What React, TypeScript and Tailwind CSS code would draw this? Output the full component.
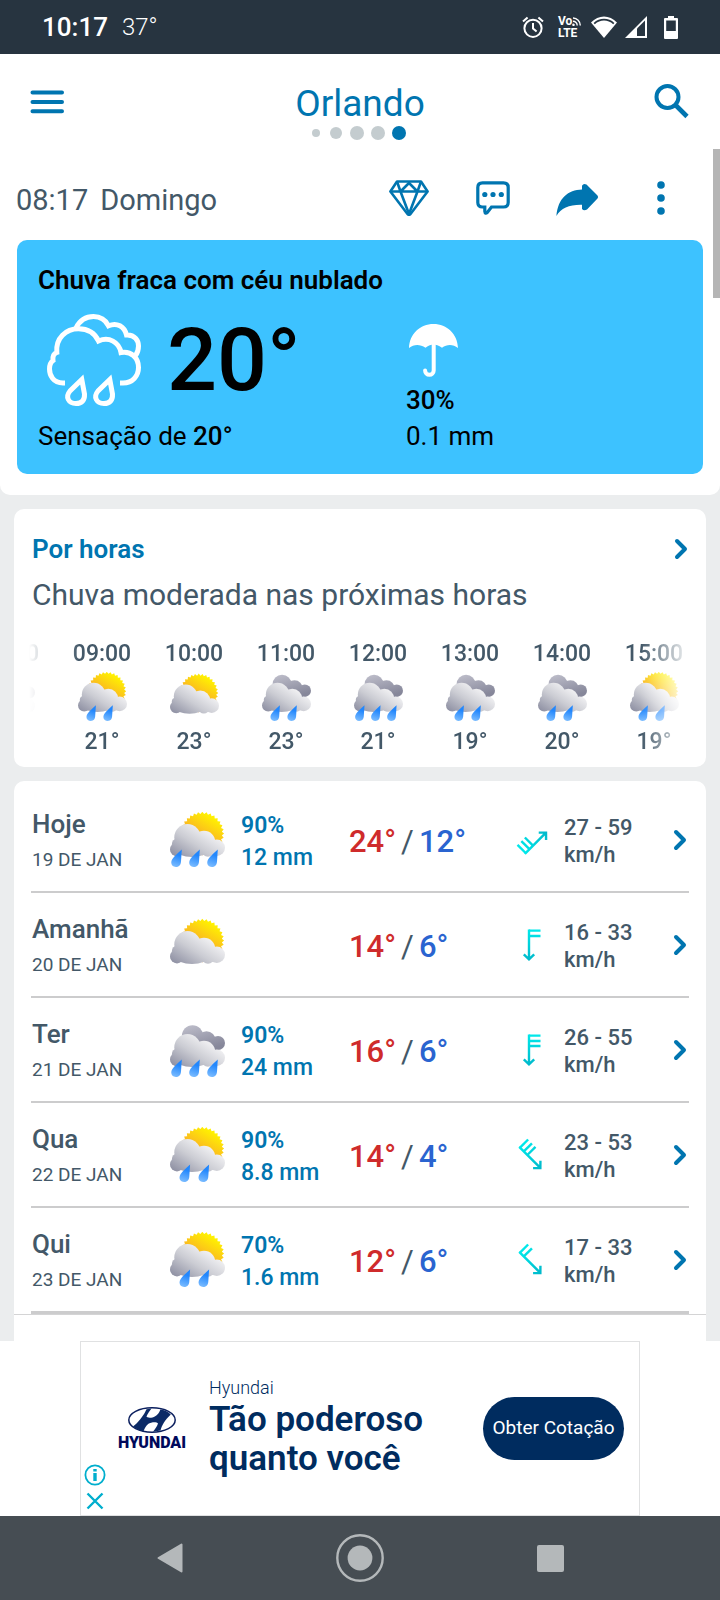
import { ReactNode } from "react";
import { clsx } from "clsx";

type Sky = "sun" | "clouds";

interface Hour {
  time: string;
  sky: Sky;
  drops: number;
  temp: string;
}

interface Day {
  name: string;
  date: string;
  sky: Sky;
  drops: number;
  chance?: string;
  rain?: string;
  max: string;
  min: string;
  wind: string;
  angle: number;
  barbs: number;
}

const hours: Hour[] = [
  { time: "08:00", sky: "clouds", drops: 0, temp: "20°" },
  { time: "09:00", sky: "sun", drops: 2, temp: "21°" },
  { time: "10:00", sky: "sun", drops: 0, temp: "23°" },
  { time: "11:00", sky: "clouds", drops: 2, temp: "23°" },
  { time: "12:00", sky: "clouds", drops: 3, temp: "21°" },
  { time: "13:00", sky: "clouds", drops: 2, temp: "19°" },
  { time: "14:00", sky: "clouds", drops: 2, temp: "20°" },
  { time: "15:00", sky: "sun", drops: 2, temp: "19°" },
];

const days: Day[] = [
  { name: "Hoje", date: "19 DE JAN", sky: "sun", drops: 3, chance: "90%", rain: "12 mm", max: "24°", min: "12°", wind: "27 - 59", angle: -135, barbs: 3 },
  { name: "Amanhã", date: "20 DE JAN", sky: "sun", drops: 0, max: "14°", min: "6°", wind: "16 - 33", angle: 0, barbs: 2 },
  { name: "Ter", date: "21 DE JAN", sky: "clouds", drops: 3, chance: "90%", rain: "24 mm", max: "16°", min: "6°", wind: "26 - 55", angle: 0, barbs: 3 },
  { name: "Qua", date: "22 DE JAN", sky: "sun", drops: 2, chance: "90%", rain: "8.8 mm", max: "14°", min: "4°", wind: "23 - 53", angle: -45, barbs: 3 },
  { name: "Qui", date: "23 DE JAN", sky: "sun", drops: 2, chance: "70%", rain: "1.6 mm", max: "12°", min: "6°", wind: "17 - 33", angle: -45, barbs: 2 },
];

// Toothed edge of the sun
const sunPoints = Array.from({ length: 64 }, (_, i) => {
  const r = i % 2 ? 19.6 : 21.8;
  const a = (i * Math.PI) / 32;
  return `${(32.3 + r * Math.cos(a)).toFixed(2)},${(21.6 + r * Math.sin(a)).toFixed(2)}`;
}).join(" ");

const dropOffsets: Record<number, number[]> = { 0: [], 2: [8.3, 27.3], 3: [0, 18, 36] };

// Shared gradients, referenced by every weather icon on the page
const Gradients = () => (
  <svg width="0" height="0" className="absolute" aria-hidden="true">
    <defs>
      <linearGradient id="sun" gradientUnits="userSpaceOnUse" x1="28" y1="28" x2="42" y2="4">
        <stop offset="0" stopColor="#f9a62b" />
        <stop offset="1" stopColor="#fff200" />
      </linearGradient>
      <linearGradient id="cloud" gradientUnits="userSpaceOnUse" x1="10" y1="49" x2="32" y2="15">
        <stop offset="0" stopColor="#8c8ea1" />
        <stop offset="0.55" stopColor="#cbccd3" />
        <stop offset="1" stopColor="#f1f1f3" />
      </linearGradient>
      <linearGradient id="dark" gradientUnits="userSpaceOnUse" x1="22" y1="4" x2="30" y2="30">
        <stop offset="0" stopColor="#b9b9c6" />
        <stop offset="1" stopColor="#86879a" />
      </linearGradient>
      <linearGradient id="drop" x1="0.6" y1="0" x2="0.4" y2="1">
        <stop offset="0.3" stopColor="#2287fd" />
        <stop offset="1" stopColor="#7bbcff" />
      </linearGradient>
      <linearGradient id="wind" gradientUnits="userSpaceOnUse" x1="0" y1="3" x2="0" y2="33">
        <stop offset="0" stopColor="#00e8ea" />
        <stop offset="1" stopColor="#00b9cb" />
      </linearGradient>
    </defs>
  </svg>
);

const WeatherIcon = ({ sky, drops, className }: { sky: Sky; drops: number; className: string }) => (
  <svg viewBox="0 0 55 55" className={className} aria-hidden="true">
    <g transform={drops ? undefined : "translate(0 2)"}>
      {sky === "sun" ? (
        <polygon points={sunPoints} fill="url(#sun)" />
      ) : (
        <g fill="url(#dark)">
          <circle cx="22.5" cy="13.8" r="10.6" />
          <circle cx="36.5" cy="18.5" r="9.2" />
          <circle cx="48" cy="21" r="7" />
          <path d="M22 14L40 12L50 27L46 28L20 26Z" />
        </g>
      )}
      <g fill="url(#cloud)">
        <circle cx="17.5" cy="25.3" r="13.2" />
        <circle cx="34" cy="30" r="11.2" />
        <circle cx="46.8" cy="35.8" r="8.2" />
        <circle cx="7" cy="37.4" r="7" />
        <circle cx="6.6" cy="31.5" r="4.6" />
        <circle cx="38" cy="38.5" r="6.2" />
        <ellipse cx="22" cy="38.5" rx="16" ry="6.4" />
        <path d="M8 28H34L47 36V43H8Z" />
      </g>
    </g>
    {dropOffsets[drops].map((x) => (
      <path
        key={x}
        transform={`translate(${x} 0)`}
        fill="url(#drop)"
        d="M11.8 37.4C8 41 4.4 44 2.4 47C-0.2 51 1.8 55 5.8 55C9.6 55 10.9 52.4 11 49.5Z"
      />
    ))}
  </svg>
);

const WindIcon = ({ angle, barbs }: { angle: number; barbs: number }) => (
  <svg viewBox="0 0 36 36" className="w-9 h-9" fill="none" stroke="url(#wind)" strokeWidth="2.4" aria-hidden="true">
    <g transform={`rotate(${angle} 18 18)`}>
      <path d="M14 2.5L14.01 32M8.8 27.3L14 32.4L19.2 27.3" />
      {[3.6, 9, 14].slice(0, barbs).map((y) => (
        <path key={y} d={`M14 ${y}L25.5 ${y + 0.01}`} />
      ))}
    </g>
  </svg>
);

const Chevron = () => (
  <svg viewBox="0 0 14 22" className="w-[14px] h-[22px] justify-self-end" fill="none" stroke="#0075b0" strokeWidth="4" strokeLinecap="round" strokeLinejoin="round" aria-hidden="true">
    <path d="M3 3L11 11L3 19" />
  </svg>
);

const ActionButton = ({ label, children }: { label: string; children: ReactNode }) => (
  <button type="button" aria-label={label} className="flex h-9 w-[84px] items-center justify-center">
    {children}
  </button>
);

const StatusBar = () => (
  <div className="flex h-[54px] items-center bg-[#273440] pl-[42px] pr-[42px] text-white">
    <span className="text-[26px] font-medium leading-8">10:17</span>
    <span className="ml-[14px] text-[24px] font-light leading-8">37°</span>
    <div className="ml-auto flex items-center">
      <svg viewBox="0 0 22 22" className="w-[22px] h-[22px]" fill="none" stroke="#fff" strokeWidth="2" aria-hidden="true">
        <circle cx="11" cy="12.3" r="8.6" />
        <path d="M11 7v5.5l3.6 3M1 5.5L5.6 1.4M21 5.5L16.4 1.4" />
      </svg>
      <div className="ml-[14px] w-[25px] font-[Roboto,sans-serif] text-[12px] font-bold leading-3">
        <div className="flex items-center">
          Vo
          <svg viewBox="0 0 9 9" className="w-[9px] h-[9px]" fill="none" stroke="#fff" strokeWidth="1.4" aria-hidden="true">
            <path d="M1 1a7.5 7.5 0 0 1 7.3 7.5M1 4.2a4.2 4.2 0 0 1 4.2 4.3" />
            <circle cx="1.5" cy="7.8" r="0.6" />
          </svg>
        </div>
        <div>LTE</div>
      </div>
      <svg viewBox="0 0 26 22" className="ml-2 w-[26px] h-[22px]" aria-hidden="true">
        <path d="M0 6.4C7.5 -1.6 18.5 -1.6 26 6.4L13 22Z" fill="#fff" />
        <path d="M3.2 7.6C9 2.4 17 2.4 22.8 7.6" fill="none" stroke="#273440" strokeWidth="1.8" />
      </svg>
      <svg viewBox="0 0 22 22" className="ml-2 w-[22px] h-[22px]" aria-hidden="true">
        <path d="M22 0V22H0Z" fill="#fff" />
        <path d="M12 12.5L20 4.5V20H12Z" fill="#273440" />
      </svg>
      <svg viewBox="0 0 14 23" className="ml-[17px] w-[14px] h-[23px]" aria-hidden="true">
        <path d="M4 0H10V2H13Q14 2 14 3V22Q14 23 13 23H1Q0 23 0 22V3Q0 2 1 2H4Z" fill="#fff" />
        <path d="M2.2 4.5H11.8V15H2.2Z" fill="#273440" />
      </svg>
    </div>
  </div>
);

const Header = () => (
  <header className="grid grid-cols-[1fr_auto_1fr] items-start px-[30px] pt-7">
    <button type="button" aria-label="Menu" className="flex h-10 w-[34px] items-center">
      <svg viewBox="0 0 34 24" className="w-[34px] h-6" stroke="#0075b0" strokeWidth="4" strokeLinecap="round" aria-hidden="true">
        <path d="M2.5 2.5H32M2.5 12H32M2.5 21.3H32" />
      </svg>
    </button>
    <div className="flex flex-col items-center">
      <h1 className="text-[37px] leading-[44px] text-[#0075b0]">Orlando</h1>
      <div className="flex h-[14px] items-center gap-[7px] pr-[3px]">
        <span className="mr-[3px] h-2 w-2 rounded-full bg-[#c4cccf]" />
        <span className="mr-[1px] h-3 w-3 rounded-full bg-[#c4cccf]" />
        <span className="h-[14px] w-[14px] rounded-full bg-[#c4cccf]" />
        <span className="h-[14px] w-[14px] rounded-full bg-[#c4cccf]" />
        <span className="h-[14px] w-[14px] rounded-full bg-[#0075b0]" />
      </div>
    </div>
    <button type="button" aria-label="Buscar" className="flex h-[38px] w-9 items-center justify-self-end">
      <svg viewBox="0 0 36 36" className="w-9 h-9" fill="none" stroke="#0075b0" strokeWidth="4" aria-hidden="true">
        <circle cx="13.5" cy="14" r="11" />
        <path d="M21.5 22L33 33.5" strokeWidth="4.6" />
      </svg>
    </button>
  </header>
);

const Toolbar = () => (
  <div className="mt-10 flex items-start justify-between pl-4 pr-[17px]">
    <p className="flex gap-3 text-[29px] leading-10 text-[#435868]">
      <span>08:17</span>
      <span>Domingo</span>
    </p>
    <div className="flex">
      <ActionButton label="Premium">
        <svg viewBox="0 0 40 36" className="w-10 h-9" fill="none" stroke="#0075b0" strokeWidth="2.6" strokeLinejoin="round" aria-hidden="true">
          <path d="M8 1.5H32L38.6 11.5L21.5 34Q20 35.4 18.5 34L1.4 11.5Z" />
          <path d="M1.4 11.5H38.6M8 1.5L11.5 11.5L20 34L28.5 11.5L32 1.5M11.5 11.5L20 3L28.5 11.5" />
        </svg>
      </ActionButton>
      <ActionButton label="Comentários">
        <svg viewBox="0 0 34 34" className="w-[34px] h-[34px]" aria-hidden="true">
          <path d="M6.5 1.8H27.5Q32.2 1.8 32.2 6.5V21.5Q32.2 26 27.5 26H15.5L11.5 31.2Q9 33.4 8.8 30.5V26H6.5Q1.8 26 1.8 21.5V6.5Q1.8 1.8 6.5 1.8Z" fill="none" stroke="#0075b0" strokeWidth="3.2" />
          <g fill="#0075b0">
            <circle cx="8.8" cy="13.5" r="2.6" />
            <circle cx="17" cy="13.5" r="2.6" />
            <circle cx="25.3" cy="13.5" r="2.6" />
          </g>
        </svg>
      </ActionButton>
      <ActionButton label="Compartilhar">
        <svg viewBox="0 0 43 36" className="w-[43px] h-9" fill="#0075b0" aria-hidden="true">
          <path d="M0.4 36C2 18 12 10 26 9.5V5.8Q27.5 2.8 30.5 4.6L41.5 15.4Q42.8 17 41.5 18.6L31 29.4Q28 31.2 26 29V24.8C13.5 24.5 5 28 0.4 36Z" />
        </svg>
      </ActionButton>
      <ActionButton label="Mais opções">
        <svg viewBox="0 0 8 34" className="w-2 h-[34px]" fill="#0075b0" aria-hidden="true">
          <circle cx="4" cy="4" r="3.8" />
          <circle cx="4" cy="17" r="3.8" />
          <circle cx="4" cy="30" r="3.8" />
        </svg>
      </ActionButton>
    </div>
  </div>
);

const CurrentWeather = () => (
  <section className="mx-[17px] mt-5 rounded-[10px] bg-[#3dc2ff] px-[21px] pb-5 pt-6 text-[26px] text-black">
    <h2 className="font-semibold leading-8">Chuva fraca com céu nublado</h2>
    <div className="grid grid-cols-[368fr_276fr]">
      <div>
        <div className="mt-[18px] flex items-center gap-[26px] pl-[9px]">
          <svg viewBox="0 0 94 92" className="w-[94px] h-[92px]" fill="none" stroke="#fff" strokeWidth="5" aria-hidden="true">
            <path d="M18 69H16C6 69 2.5 61 2.5 55C2.5 51 4 48 6 46.5C5.5 42.5 7 39.5 9.8 38.5C8.5 24 19 14.8 31.5 14.8C41 14.8 48 19.5 51.5 27C62 22.5 72 28 74 38.5C84 36.5 91.5 44 91.5 53.5C91.5 62 85.5 69 76 69H73" />
            <path d="M29 14C33 6 39 2.6 46.5 2.6C53 2.6 58.5 6 61.5 11.8C70 8 77.5 12.5 79.5 21C88 20.5 91.5 27 91.5 32C91.5 36 90.5 39 88.5 41.5" />
            <path d="M34.8 65.5L23 77C18 83 21.5 89.5 29 89.5C35 89.5 37.8 86 37.5 80Z" />
            <path d="M62.8 65.5L51 77C46 83 49.5 89.5 57 89.5C63 89.5 65.8 86 65.5 80Z" />
          </svg>
          <span className="text-[88px] font-medium leading-[90px]">20°</span>
        </div>
        <p className="mt-3 leading-9">
          Sensação de <span className="font-medium">20°</span>
        </p>
      </div>
      <div className="pt-7">
        <svg viewBox="0 0 50 53" className="ml-[3px] w-[50px] h-[53px]" aria-hidden="true">
          <path d="M0 24C0.5 10 11 0 24.5 0S48.5 10 49 24C44 20 38 20 33 23.8Q28 20.5 24.5 20.5T16.5 23.8C11 20 5 20 0 24Z" fill="#fff" />
          <path d="M24.7 18V46.5a4.3 4.3 0 0 1-8.6 0" fill="none" stroke="#fff" strokeWidth="4" strokeLinecap="round" />
        </svg>
        <p className="mt-[5px] font-medium leading-9">30%</p>
        <p className="leading-9">0.1 mm</p>
      </div>
    </div>
  </section>
);

const HourlyCard = () => (
  <section className="mx-[14px] mt-[14px] rounded-[10px] bg-white pb-[11px] pt-6">
    <div className="px-[18px]">
      <a href="#horas" className="flex h-8 items-center justify-between">
        <h2 className="text-[26px] font-semibold leading-8 text-[#0075b0]">Por horas</h2>
        <Chevron />
      </a>
      <p className="mt-[10px] text-[30px] leading-10 text-[#435868]">Chuva moderada nas próximas horas</p>
    </div>
    <div className="mx-[15px] mt-[25px] overflow-hidden [mask-image:linear-gradient(to_right,transparent,black_50px,black_calc(100%-50px),transparent)]">
      <ul className="-ml-[65px] flex text-[23px] font-medium leading-7 text-[#435868]">
        {hours.map((hour) => (
          <li key={hour.time} className="flex w-[92px] shrink-0 flex-col items-center">
            <span>{hour.time}</span>
            <WeatherIcon sky={hour.sky} drops={hour.drops} className="mt-1 w-[49px] h-[49px]" />
            <span className="mt-[7px]">{hour.temp}</span>
          </li>
        ))}
      </ul>
    </div>
  </section>
);

const DayRow = ({ day, last }: { day: Day; last: boolean }) => (
  <li className={clsx("border-[#cccccd]", last ? "border-b-3" : "border-b-2")}>
    <a
      href="#dia"
      className="grid h-[103px] grid-cols-[138fr_71fr_108fr_166fr_49fr_109fr_14fr] items-center pl-[1px] pr-[2px] text-[#435868]"
    >
      <div className="pt-1">
        <p className="text-[26px] font-medium leading-8">{day.name}</p>
        <p className="mt-1 text-[19px] leading-8">{day.date}</p>
      </div>
      <WeatherIcon sky={day.sky} drops={day.drops} className="w-[55px] h-[55px]" />
      <div className="whitespace-nowrap pt-1 text-[23px] leading-8 text-[#0075b0]">
        <p className="font-semibold">{day.chance}</p>
        <p className="font-medium">{day.rain}</p>
      </div>
      <p className="flex gap-[5px] pt-1 text-[31px] font-medium leading-10">
        <span className="text-[#cf2b2b]">{day.max}</span>
        <span className="font-normal">/</span>
        <span className="text-[#2a64d0]">{day.min}</span>
      </p>
      <WindIcon angle={day.angle} barbs={day.barbs} />
      <p className="pt-[2px] text-[22px] font-medium leading-[27px]">
        {day.wind}
        <br />
        km/h
      </p>
      <Chevron />
    </a>
  </li>
);

const HyundaiLogo = () => (
  <div className="flex w-[70px] flex-col items-center text-[#00095b]">
    <svg viewBox="0 0 48 26" className="w-12 h-[26px]" aria-hidden="true">
      <ellipse cx="24" cy="13" rx="23.2" ry="12.2" fill="none" stroke="#0b1f5e" strokeWidth="1.5" />
      <path d="M18.5 2.2C16.5 6.5 14.5 10 8.5 16.5L5 19.5C9 22.5 12 23.6 15.5 24.2C17.5 19.5 19 16.5 24 15.5C27 15 29.5 15.8 30 16.5C29 19.5 27 22 25 24.8L32.5 23.6C34 18 36.5 13.5 42.8 7.5C40 4.5 36 3 32.5 2.3C31 6.5 28.5 9.6 24.5 10.4C21.5 11 18.8 10.6 18.5 9.6C19.5 7 21.5 4 23.5 1.6Z" fill="#0b2a66" />
    </svg>
    <span className="mt-[2px] text-[16px] font-black leading-4">HYUNDAI</span>
  </div>
);

const AdBanner = () => (
  <aside className="flex justify-center bg-white">
    <div className="relative flex h-[175px] w-[560px] items-center border border-[#e0e1e2] pl-9 pr-[15px] text-[#002c5f]">
      <HyundaiLogo />
      <div className="ml-[22px] pb-1">
        <p className="text-[18px] font-light leading-6">Hyundai</p>
        <p className="text-[35px] font-semibold leading-[39px]">
          Tão poderoso
          <br />
          quanto você
        </p>
      </div>
      <button type="button" className="ml-auto h-[63px] w-[141px] whitespace-nowrap rounded-full bg-[#002c5f] text-[19px] text-white">
        Obter Cotação
      </button>
      <div className="absolute bottom-[3px] left-[3px] flex flex-col gap-1">
        <button type="button" aria-label="Sobre este anúncio">
          <svg viewBox="0 0 22 22" className="w-[22px] h-[22px]" fill="none" stroke="#00aecd" aria-hidden="true">
            <circle cx="11" cy="11" r="9.6" strokeWidth="1.8" />
            <path d="M11 9V17M11 5V7.4" strokeWidth="3.4" />
          </svg>
        </button>
        <button type="button" aria-label="Fechar anúncio">
          <svg viewBox="0 0 22 22" className="w-[22px] h-[22px]" fill="none" stroke="#00aecd" strokeWidth="2.4" aria-hidden="true">
            <path d="M3.5 3.5L18.5 18.5M18.5 3.5L3.5 18.5" />
          </svg>
        </button>
      </div>
    </div>
  </aside>
);

const NavigationBar = () => (
  <nav className="flex h-[84px] items-center justify-center gap-[140px] bg-[#464d53]">
    <button type="button" aria-label="Voltar" className="flex w-[50px] justify-center">
      <svg viewBox="0 0 26 30" className="w-[26px] h-[30px]" fill="#b4b8ba" stroke="#b4b8ba" strokeWidth="2" strokeLinejoin="round" aria-hidden="true">
        <path d="M1.5 15L24.5 1.5V28.5Z" />
      </svg>
    </button>
    <button type="button" aria-label="Início">
      <svg viewBox="0 0 50 50" className="w-[50px] h-[50px]" aria-hidden="true">
        <circle cx="25" cy="25" r="22.7" fill="none" stroke="#b4b8ba" strokeWidth="2.4" />
        <circle cx="25" cy="25" r="12.4" fill="#b4b8ba" />
      </svg>
    </button>
    <button type="button" aria-label="Recentes" className="flex w-[50px] justify-center">
      <span className="h-[27px] w-[27px] rounded-[2px] bg-[#b4b8ba]" />
    </button>
  </nav>
);

export default function App() {
  return (
    <div className="relative min-h-screen bg-[#ebedee] font-[Roboto,sans-serif]">
      <Gradients />
      <StatusBar />
      <main>
        <div className="rounded-b-[10px] bg-white pb-[21px]">
          <Header />
          <Toolbar />
          <CurrentWeather />
        </div>
        <HourlyCard />
        <section className="mx-[14px] mt-[14px] rounded-t-[10px] bg-white pt-[7px]">
          <ul className="px-[17px]">
            {days.map((day, i) => (
              <DayRow key={day.date} day={day} last={i === days.length - 1} />
            ))}
          </ul>
          <div className="h-[27px] border-t border-[#d4d4d5]" />
        </section>
      </main>
      <AdBanner />
      <NavigationBar />
      <div className="absolute right-0 top-[149px] h-[149px] w-[7px] bg-[#b5b5b5]" />
    </div>
  );
}
